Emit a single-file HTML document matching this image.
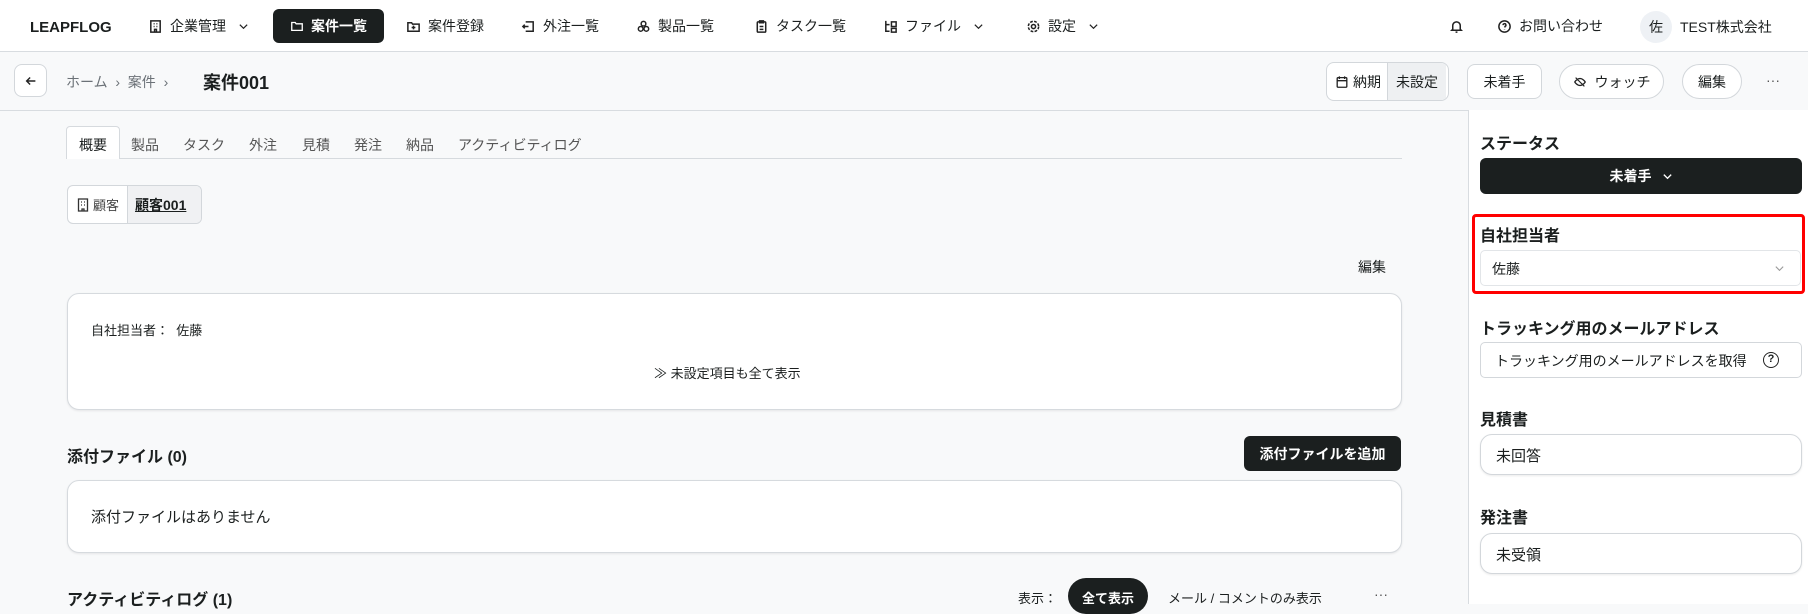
<!DOCTYPE html>
<html><head><meta charset="utf-8"><style>
*{box-sizing:border-box;margin:0;padding:0}
body{width:1808px;height:604px;overflow:hidden;background:#f8f9fa;font-family:"Liberation Sans","Noto Sans CJK JP",sans-serif;color:#1b1f1f;position:relative;font-size:14px}
.a{position:absolute;white-space:nowrap}
.hdr{position:absolute;left:0;top:0;width:1808px;height:52px;background:#fff;border-bottom:1px solid #d8dce0}
.nav{position:absolute;top:9px;height:34px;display:flex;align-items:center;gap:7px;font-size:14px}
.nav svg{width:15px;height:15px;fill:none;stroke:#222;stroke-width:1.6}
.nav svg.ch{width:11px;height:11px;stroke-width:1.3;margin-left:5px}
.btn{position:absolute;background:#fff;border:1px solid #d3d7db;border-radius:8px;display:flex;align-items:center;justify-content:center;font-size:14px}
.card{position:absolute;background:#fff;border:1px solid #d6dade;border-radius:12px;box-shadow:0 1px 2px rgba(0,0,0,.08)}
.side{position:absolute;left:1468px;top:110px;width:340px;height:494px;background:#fff;border-left:1px solid #d8dce0}
.lbl{position:absolute;left:1480px;font-weight:bold;font-size:16px}
</style></head><body>
<div class="hdr"></div>
<div class="a" style="left:30px;top:19px;font-weight:bold;font-size:15px">LEAPFLOG</div>
<div class="nav" style="left:148px"><svg viewBox="0 0 16 16"><rect x="3" y="2" width="10" height="12"/><path d="M6 5h1M9 5h1M6 8h1M9 8h1M7 14v-3h2v3"/></svg>企業管理<svg class="ch" viewBox="0 0 12 12"><path d="M2 4l4 4 4-4"/></svg></div>
<div class="a" style="left:273px;top:9px;width:111px;height:34px;background:#1b1f1f;border-radius:6px;color:#fff;display:flex;align-items:center;justify-content:center;gap:7px;font-weight:bold;font-size:14px"><svg viewBox="0 0 16 16" width="14" height="14" fill="none" stroke="#fff" stroke-width="1.5"><path d="M2 4h4l1 1.5h7V13H2z"/></svg>案件一覧</div>
<div class="nav" style="left:406px"><svg viewBox="0 0 16 16"><path d="M2 4h4l1 1.5h7V13H2z M8 7v4M6 9h4"/></svg>案件登録</div>
<div class="nav" style="left:521px"><svg viewBox="0 0 16 16"><path d="M5 3h8v10H5M8 8H2M4 6 2 8l2 2"/></svg>外注一覧</div>
<div class="nav" style="left:636px"><svg viewBox="0 0 16 16"><circle cx="8" cy="5" r="2.5"/><circle cx="5" cy="10.5" r="2.5"/><circle cx="11" cy="10.5" r="2.5"/></svg>製品一覧</div>
<div class="nav" style="left:754px"><svg viewBox="0 0 16 16"><rect x="3.5" y="3" width="9" height="11" rx="1"/><path d="M6 2h4v2H6zM6 8h4M6 11h4"/></svg>タスク一覧</div>
<div class="nav" style="left:883px"><svg viewBox="0 0 16 16"><path d="M3 2v11h4M3 6h4M9 3h5v5H9zM9 10h5v4H9z"/></svg>ファイル<svg class="ch" viewBox="0 0 12 12"><path d="M2 4l4 4 4-4"/></svg></div>
<div class="nav" style="left:1026px"><svg viewBox="0 0 16 16"><circle cx="8" cy="8" r="2.2"/><circle cx="8" cy="8" r="5.5" stroke-dasharray="3 1.4"/></svg>設定<svg class="ch" viewBox="0 0 12 12"><path d="M2 4l4 4 4-4"/></svg></div>
<div class="nav" style="left:1449px"><svg viewBox="0 0 16 16"><path d="M4 11V7a4 4 0 0 1 8 0v4l1 1H3zM7 14h2"/></svg></div>
<div class="nav" style="left:1497px"><svg viewBox="0 0 16 16"><circle cx="8" cy="8" r="6"/><path d="M6.5 6.5a1.5 1.5 0 1 1 2 1.4V9M8 11v.5"/></svg>お問い合わせ</div>
<div class="a" style="left:1640px;top:11px;width:32px;height:32px;border-radius:50%;background:#eef1f5;display:flex;align-items:center;justify-content:center;font-size:14px">佐</div>
<div class="a" style="left:1680px;top:17px;font-size:14px">TEST株式会社</div>

<div class="a" style="left:0;top:110px;width:1808px;border-top:1px solid #d8dce0"></div>
<div class="btn" style="left:14px;top:64px;width:33px;height:33px"><svg width="14" height="14" viewBox="0 0 16 16" fill="none" stroke="#222" stroke-width="1.6"><path d="M13 8H3M7 4 3 8l4 4"/></svg></div>
<div class="a" style="left:66px;top:72px;color:#6b7177;font-size:14px">ホーム &nbsp;›&nbsp; 案件 &nbsp;›</div>
<div class="a" style="left:203px;top:69px;font-weight:bold;font-size:18px">案件001</div>
<div class="btn" style="left:1326px;top:62px;width:123px;height:39px;justify-content:flex-start;overflow:hidden">
<span style="padding:0 6px 0 8px;display:flex;align-items:center;gap:4px"><svg width="14" height="14" viewBox="0 0 16 16" fill="none" stroke="#222" stroke-width="1.5"><rect x="2.5" y="3" width="11" height="11" rx="1"/><path d="M2.5 6.5h11M5 1.5v3M11 1.5v3"/></svg>納期</span><span style="background:#eef0f2;height:100%;display:flex;align-items:center;padding:0 8px;border-left:1px solid #d3d7db">未設定</span></div>
<div class="btn" style="left:1467px;top:64px;width:75px;height:35px">未着手</div>
<div class="btn" style="left:1559px;top:64px;width:105px;height:35px;border-radius:18px;gap:8px"><svg width="14" height="14" viewBox="0 0 16 16" fill="none" stroke="#222" stroke-width="1.4"><path d="M2 8s2.5-4 6-4 6 4 6 4-2.5 4-6 4-6-4-6-4zM3 3l10 10"/></svg>ウォッチ</div>
<div class="btn" style="left:1682px;top:64px;width:60px;height:35px;border-radius:18px">編集</div>
<div class="a" style="left:1766px;top:72px;color:#555">···</div>

<div class="a" style="left:66px;top:158px;width:1336px;border-top:1px solid #d6dade"></div>
<div class="a" style="left:66px;top:126px;width:54px;height:33px;background:#fff;border:1px solid #d6dade;border-bottom:none;border-radius:4px 4px 0 0"></div>
<div class="a" style="left:79px;top:135px;font-size:14px">概要</div>
<div class="a" style="left:131px;top:135px;font-size:14px;color:#555">製品</div>
<div class="a" style="left:183px;top:135px;font-size:14px;color:#555">タスク</div>
<div class="a" style="left:249px;top:135px;font-size:14px;color:#555">外注</div>
<div class="a" style="left:302px;top:135px;font-size:14px;color:#555">見積</div>
<div class="a" style="left:354px;top:135px;font-size:14px;color:#555">発注</div>
<div class="a" style="left:406px;top:135px;font-size:14px;color:#555">納品</div>
<div class="a" style="left:458px;top:135px;font-size:14px;color:#555">アクティビティログ</div>

<div class="a" style="left:67px;top:185px;width:135px;height:39px;border:1px solid #d3d7db;border-radius:6px;overflow:hidden;display:flex;background:#fff">
<span style="display:flex;align-items:center;gap:4px;padding:0 8px 0 9px;font-size:13px;color:#444"><svg width="12" height="14" viewBox="0 0 12 14" fill="none" stroke="#333" stroke-width="1.3"><rect x="1.5" y="1" width="9" height="12"/><path d="M4 4h1M7 4h1M4 7h1M7 7h1M5 13v-2h2v2"/></svg>顧客</span>
<span style="background:#f0f1f3;display:flex;align-items:center;padding:0 7px;border-left:1px solid #d3d7db;font-weight:bold;text-decoration:underline;font-size:14px;flex:1">顧客001</span></div>
<div class="a" style="left:1358px;top:257px;font-size:14px">編集</div>

<div class="card" style="left:67px;top:293px;width:1335px;height:117px"></div>
<div class="a" style="left:91px;top:320px;font-size:13px">自社担当者： &nbsp;佐藤</div>
<div class="a" style="left:654px;top:363px;font-size:13px">≫ 未設定項目も全て表示</div>

<div class="a" style="left:67px;top:443px;font-weight:bold;font-size:16px">添付ファイル (0)</div>
<div class="a" style="left:1244px;top:436px;width:157px;height:35px;background:#1b1f1f;border-radius:6px;color:#fff;font-weight:bold;font-size:14px;display:flex;align-items:center;justify-content:center">添付ファイルを追加</div>
<div class="card" style="left:67px;top:480px;width:1335px;height:73px"></div>
<div class="a" style="left:91px;top:506px;font-size:15px">添付ファイルはありません</div>

<div class="a" style="left:67px;top:586px;font-weight:bold;font-size:16px">アクティビティログ (1)</div>
<div class="a" style="left:1018px;top:588px;font-size:13px">表示：</div>
<div class="a" style="left:1068px;top:578px;width:80px;height:36px;background:#1b1f1f;border-radius:18px;color:#fff;font-size:13px;font-weight:bold;text-align:center;padding-top:10px">全て表示</div>
<div class="a" style="left:1168px;top:588px;font-size:13px">メール / コメントのみ表示</div>
<div class="a" style="left:1374px;top:586px;color:#555">···</div>

<div class="side"></div>
<div class="lbl" style="top:130px">ステータス</div>
<div class="a" style="left:1480px;top:158px;width:322px;height:36px;background:#1b1f1f;border-radius:6px;color:#fff;font-weight:bold;font-size:14px;display:flex;align-items:center;justify-content:center;gap:10px">未着手 <svg width="11" height="11" viewBox="0 0 12 12" fill="none" stroke="#fff" stroke-width="1.5"><path d="M2 4l4 4 4-4"/></svg></div>
<div class="a" style="left:1472px;top:214px;width:333px;height:80px;border:3px solid #f00;border-radius:4px"></div>
<div class="lbl" style="top:222px">自社担当者</div>
<div class="a" style="left:1480px;top:250px;width:321px;height:36px;border:1px solid #e2e5e8;border-radius:5px;background:#fff"></div>
<div class="a" style="left:1492px;top:259px;font-size:14px">佐藤</div>
<svg class="a" style="left:1774px;top:263px" width="11" height="11" viewBox="0 0 12 12" fill="none" stroke="#999" stroke-width="1.2"><path d="M2 4l4 4 4-4"/></svg>
<div class="lbl" style="top:315px">トラッキング用のメールアドレス</div>
<div class="a" style="left:1480px;top:342px;width:322px;height:36px;border:1px solid #d3d7db;border-radius:5px;background:#fff"></div>
<div class="a" style="left:1495px;top:351px;font-size:14px">トラッキング用のメールアドレスを取得</div>
<div class="a" style="left:1763px;top:352px;width:16px;height:16px;border:1.5px solid #222;border-radius:50%;font-size:11px;text-align:center;line-height:13px;font-weight:bold">?</div>
<div class="lbl" style="top:406px">見積書</div>
<div class="a" style="left:1480px;top:434px;width:322px;height:41px;border:1px solid #d3d7db;border-radius:12px;background:#fff;box-shadow:0 1px 2px rgba(0,0,0,.08)"></div>
<div class="a" style="left:1496px;top:445px;font-size:15px">未回答</div>
<div class="lbl" style="top:504px">発注書</div>
<div class="a" style="left:1480px;top:533px;width:322px;height:41px;border:1px solid #d3d7db;border-radius:12px;background:#fff;box-shadow:0 1px 2px rgba(0,0,0,.08)"></div>
<div class="a" style="left:1496px;top:544px;font-size:15px">未受領</div>
</body></html>
